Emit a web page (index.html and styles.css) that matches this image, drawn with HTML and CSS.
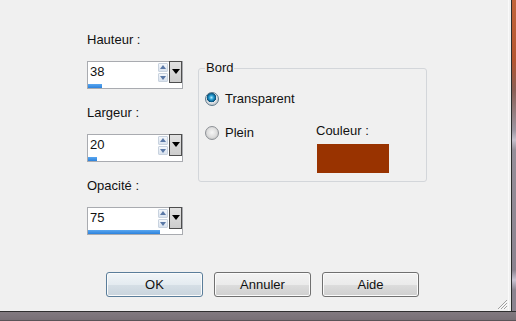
FILE: index.html
```
<!DOCTYPE html>
<html>

<head>
    <link rel="stylesheet" href="styles.css">
</head>

<body>
    <div class="window">
        <div class="window-body">
            <div class="client">
                <div class="content">
                    <div class="fields">
                        <div class="field">
                            <div class="label">Hauteur :</div>
                            <div class="spin">
                                <div class="spin-row">
                                    <div class="spin-value">38</div>
                                    <div class="spin-arrows"><span class="spin-btn up"></span><span class="spin-btn down"></span></div>
                                    <div class="spin-drop"></div>
                                </div>
                                <div class="spin-track"><div class="spin-fill" style="width: 14px"></div></div>
                            </div>
                        </div>
                        <div class="field">
                            <div class="label">Largeur :</div>
                            <div class="spin">
                                <div class="spin-row">
                                    <div class="spin-value">20</div>
                                    <div class="spin-arrows"><span class="spin-btn up"></span><span class="spin-btn down"></span></div>
                                    <div class="spin-drop"></div>
                                </div>
                                <div class="spin-track"><div class="spin-fill" style="width: 9px"></div></div>
                            </div>
                        </div>
                        <div class="field">
                            <div class="label">Opacité :</div>
                            <div class="spin">
                                <div class="spin-row">
                                    <div class="spin-value">75</div>
                                    <div class="spin-arrows"><span class="spin-btn up"></span><span class="spin-btn down"></span></div>
                                    <div class="spin-drop"></div>
                                </div>
                                <div class="spin-track"><div class="spin-fill" style="width: 72px"></div></div>
                            </div>
                        </div>
                    </div>

                    <fieldset class="group">
                        <legend>Bord</legend>
                        <div class="radio-row"><span class="radio checked"></span>Transparent</div>
                        <div class="fill-row">
                            <div class="radio-row plein"><span class="radio"></span>Plein</div>
                            <div class="colour">
                                <div class="label">Couleur :</div>
                                <div class="swatch"></div>
                            </div>
                        </div>
                    </fieldset>
                </div>

                <div class="buttons">
                    <div class="button default">OK</div>
                    <div class="button">Annuler</div>
                    <div class="button">Aide</div>
                </div>

                <svg class="grip" width="12" height="12" viewBox="0 0 12 12">
                    <path d="M11 2 L2 11 M11 5 L5 11 M11 8 L8 11" stroke="#a0a0a0" stroke-width="1"/>
                    <path d="M11.8 2.8 L2.8 11.8 M11.8 5.8 L5.8 11.8 M11.8 8.8 L8.8 11.8" stroke="#ffffff" stroke-width="1"/>
                </svg>
            </div>
            <div class="frame-right"></div>
        </div>
        <div class="frame-bottom"></div>
    </div>
</body>

</html>
```

FILE: styles.css
```
body {
    margin: 0;
    background-color: #f0f0f0;
    font-family: "Liberation Sans", Arial, sans-serif;
    font-size: 13px;
    color: #111;
}

.window {
    width: 516px;
    height: 321px;
    display: flex;
    flex-direction: column;
}

.window-body {
    height: 311px;
    display: flex;
}

.client {
    width: 508px;
    height: 311px;
    box-sizing: border-box;
    padding: 32px 0 0 87px;
    background-color: #f0f0f0;
    position: relative;
}

.content {
    display: flex;
    align-items: flex-start;
}

.label {
    height: 16px;
    line-height: 16px;
    white-space: nowrap;
}

/* spin boxes */

.fields {
    width: 96px;
    display: flex;
    flex-direction: column;
    gap: 16px;
}

.field .label {
    margin-bottom: 13px;
}

.spin {
    width: 96px;
    height: 28px;
    box-sizing: border-box;
    border: 1px solid #a9abb0;
    background-color: #fff;
    display: flex;
    flex-direction: column;
}

.spin-row {
    height: 22px;
    display: flex;
}

.spin-value {
    flex: 1;
    padding-left: 2px;
    line-height: 19px;
}

.spin-arrows {
    width: 10px;
    display: flex;
    flex-direction: column;
    gap: 1px;
    padding: 1px 1px 0 0;
}

.spin-btn {
    height: 9px;
    box-sizing: border-box;
    border: 1px solid #c9d3df;
    border-radius: 1px;
    background: linear-gradient(#f4f7fb, #d9e2ee);
    position: relative;
}

.spin-btn::after {
    content: "";
    position: absolute;
    left: 1px;
    border-left: 3px solid transparent;
    border-right: 3px solid transparent;
}

.spin-btn.up::after {
    top: 1px;
    border-bottom: 4px solid #5a78a6;
}

.spin-btn.down::after {
    top: 2px;
    border-top: 4px solid #5a78a6;
}

.spin-drop {
    width: 13px;
    margin-top: -1px;
    box-sizing: border-box;
    border: 1px solid #4e4e4e;
    background: linear-gradient(#e2e2e2, #cdcdcd);
    display: flex;
    justify-content: center;
    padding-top: 7px;
}

.spin-drop::after {
    content: "";
    width: 0;
    height: 0;
    border-left: 4px solid transparent;
    border-right: 4px solid transparent;
    border-top: 5px solid #000;
}

.spin-track {
    height: 4px;
    margin-top: 1px;
}

.spin-fill {
    height: 4px;
    background: linear-gradient(#5aa7f0, #2c82dc);
}

/* group box */

.group {
    margin: 28px 0 0 15px;
    width: 229px;
    box-sizing: border-box;
    border: 1px solid #d3d6da;
    border-radius: 3px;
    padding: 15px 6px 8px 6px;
}

.group legend {
    padding: 0 1px;
    line-height: 16px;
}

.radio-row {
    height: 16px;
    line-height: 16px;
    display: flex;
    align-items: center;
    white-space: nowrap;
}

.radio {
    width: 14px;
    height: 14px;
    box-sizing: border-box;
    border-radius: 50%;
    border: 1px solid #8d9196;
    background: radial-gradient(circle at 50% 45%, #f6f6f6 0, #dcdcdc 5px, #c4c4c4 7px);
    margin-right: 6px;
}

.radio.checked {
    border-color: #5f7a8c;
    background: radial-gradient(circle at 45% 38%, #b8ecff 0, #2ea3d6 2px, #0a5f8e 4px, #0b4c72 4.5px, #e4e8ec 5px, #c8ccd0 7px);
}

.fill-row {
    margin-top: 16px;
    display: flex;
    align-items: flex-start;
}

.plein {
    width: 111px;
    margin-top: 2px;
}

.swatch {
    width: 72px;
    height: 29px;
    margin: 5px 0 0 1px;
    background-color: #993300;
}

/* buttons */

.buttons {
    margin-top: 37px;
    padding-left: 19px;
    display: flex;
    gap: 11px;
}

.button {
    width: 97px;
    height: 25px;
    box-sizing: border-box;
    border: 1px solid #707070;
    border-radius: 3px;
    background: linear-gradient(#f3f3f3, #ebebeb 50%, #dddddd 50%, #cfcfcf);
    box-shadow: inset 0 0 0 1px #fbfbfb;
    display: flex;
    justify-content: center;
    align-items: center;
}

.button.default {
    border-color: #5a7d9a;
    background: linear-gradient(#f1f5f8, #e4ebf0 50%, #d6dfe6 50%, #c9d4dd);
}

.grip {
    position: absolute;
    right: 0;
    bottom: 1px;
}

/* window frame */

.frame-right {
    width: 8px;
    box-sizing: border-box;
    border-left: 1px solid #fafafa;
    background: linear-gradient(90deg, #f0f0f0 0, #f0f0f0 2px, #2e2e2e 2px, #2e2e2e 3px, transparent 3px),
        linear-gradient(#c2653b 0, #b4552f 60px, #8b5f55 90px, #9b95a0 130px, #c6c0cc 140px, #958f99 150px, #8a838f 270px, #c9c3d2 280px, #8b8490 290px);
}

.frame-bottom {
    height: 10px;
    border-top: 1px solid #2f2f2f;
    background: linear-gradient(#827a80, #766e74);
    box-shadow: inset 0 -1px 0 #5a5358;
}
```
